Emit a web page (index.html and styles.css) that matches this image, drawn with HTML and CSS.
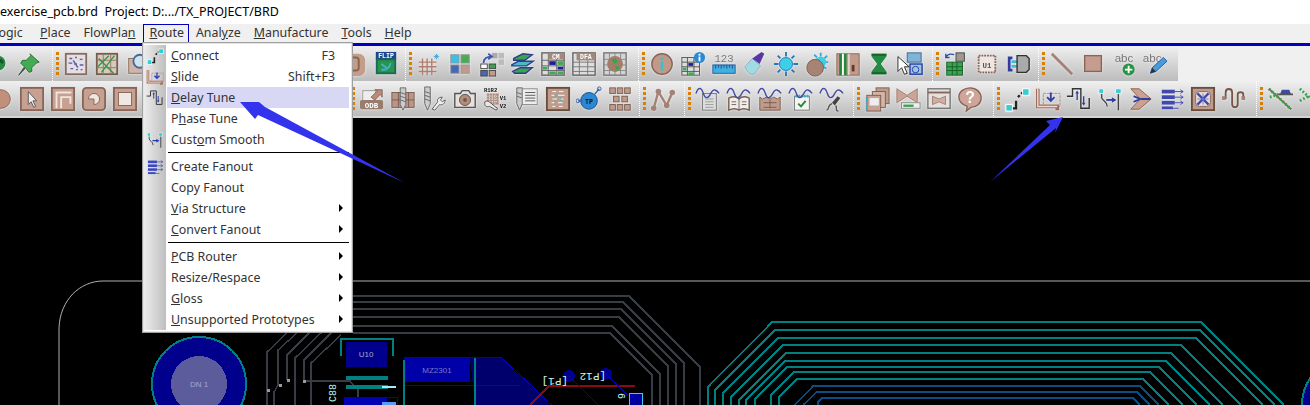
FILE: index.html
```html
<!DOCTYPE html>
<html lang="en">
<head>
    <meta charset="UTF-8">
    <title>exercise_pcb.brd</title>
    <link rel="stylesheet" href="styles.css">
</head>
<body>

<svg class="defs" xmlns="http://www.w3.org/2000/svg">
    <!-- toolbar icons, row 1 -->
    <symbol id="i-ball" viewBox="0 0 28 28"><circle cx="14" cy="13" r="8" fill="#1d8a3c"/><path d="M8 11c3-4 9-4 12 0l-1 3c-3-3-8-3-10 0z" fill="#0d5a24"/></symbol>
    <symbol id="i-pin" viewBox="0 0 28 28"><path d="M15 3l10 9-3 1-5 5 0 4-3 1-4-5-7 8 6-9-4-4 2-3 4 0 5-5z" fill="#38b048" stroke="#1c6c2c"/><path d="M2 27l7-9 1 1z" fill="#444"/></symbol>
    <symbol id="i-dots" viewBox="0 0 28 28"><rect x="3" y="3" width="22" height="22" fill="#e4dfe6" stroke="#8c6c5c" stroke-width="2"/><path d="M7 8h3M13 7h2M18 9h3M6 13h4M12 14h3M18 15h4M8 19h3M14 20h2M19 20h2M11 10l5 8" stroke="#5a5ab0" stroke-width="1.5"/></symbol>
    <symbol id="i-hatch" viewBox="0 0 28 28"><rect x="3" y="3" width="22" height="22" fill="#d8cabc" stroke="#7c5c4c" stroke-width="2"/><path d="M3 10h22M3 18h22M10 3v22M18 3v22" stroke="#9c7464"/><path d="M5 8l16 16M22 5L8 23M4 17l12-12" stroke="#2c9a3c" stroke-width="1.5"/></symbol>
    <symbol id="i-zoom" viewBox="0 0 28 28"><rect x="4" y="8" width="16" height="16" fill="#d4b4a4" stroke="#8c6c5c"/><circle cx="16" cy="11" r="7" fill="#cfe2ee" stroke="#3c6ca4" stroke-width="2"/></symbol>
    <symbol id="i-blob" viewBox="0 0 28 28"><rect x="3" y="3" width="22" height="24" rx="7" fill="#c89c84"/><rect x="9" y="7" width="9" height="14" rx="3" fill="none" stroke="#8c6448" stroke-width="2"/></symbol>
    <symbol id="i-flip" viewBox="0 0 28 28"><rect x="3" y="1" width="22" height="8" fill="#14489c"/><text x="14" y="8" class="t7 w" text-anchor="middle">FLIP</text><rect x="4" y="9" width="20" height="15" fill="#1a9a48" stroke="#0e6c54" stroke-width="2"/><path d="M9 20c5 1 9-2 10-7M9 14l7 5" stroke="#35b4d4" stroke-width="2" fill="none"/></symbol>
    <symbol id="i-grid" viewBox="0 0 28 28"><path d="M3 12h19M3 17h19M3 22h19M7 8v18M12 8v18M17 8v18" stroke="#b87c68" stroke-width="1.5"/><path d="M22 3v6M19 6h6M20 4l4 4M24 4l-4 4" stroke="#38a8dc"/></symbol>
    <symbol id="i-squares" viewBox="0 0 28 28"><rect x="4" y="4" width="9" height="9" fill="#28c4ee" stroke="#999"/><rect x="15" y="4" width="9" height="9" fill="#3cb04c" stroke="#999"/><rect x="4" y="15" width="9" height="9" fill="#4468c0" stroke="#999"/><rect x="15" y="15" width="9" height="9" fill="#c49a88" stroke="#999"/></symbol>
    <symbol id="i-swap" viewBox="0 0 28 28"><rect x="15" y="2" width="6" height="6" fill="#aaa"/><rect x="22" y="2" width="6" height="6" fill="#bbb"/><rect x="22" y="9" width="6" height="6" fill="#bbb"/><rect x="3" y="14" width="7" height="5" fill="#fff" stroke="#444"/><rect x="12" y="14" width="7" height="5" fill="#2fa840" stroke="#444"/><rect x="3" y="21" width="7" height="6" fill="#4468c0" stroke="#444"/><rect x="12" y="21" width="7" height="6" fill="#c49a88" stroke="#444"/><path d="M6 13c0-5 4-7 8-7M11 3l4 3-4 3" fill="none" stroke="#3c58b4" stroke-width="2"/></symbol>
    <symbol id="i-layers" viewBox="0 0 28 28"><path d="M5 8l10-5 10 1-8 6H5z" fill="#2ca844" stroke="#2c3c9c" stroke-width="1.5"/><path d="M3 15l7-4h16l-7 5H3z" fill="#38c0c8" stroke="#2c3c9c" stroke-width="1.5"/><path d="M4 22l8-4h13l-7 6H6z" fill="#2ca844" stroke="#2c3c9c" stroke-width="1.5"/></symbol>
    <symbol id="i-cm" viewBox="0 0 28 28"><rect x="2" y="2" width="24" height="24" fill="#ddd" stroke="#666" stroke-width="1.5"/><path d="M2 10h24M2 16h24M2 21h24M9 2v24M18 2v24" stroke="#666"/><rect x="9" y="2" width="17" height="7" fill="#a88878"/><text x="17" y="8.5" class="t7 w" text-anchor="middle">CM</text><rect x="10" y="11" width="7" height="4" fill="#1a1ab4"/><rect x="19" y="11" width="6" height="4" fill="#2cb04c"/><rect x="3" y="17" width="5" height="3" fill="#2cb04c"/><rect x="19" y="17" width="6" height="3" fill="#1a1ab4"/><rect x="10" y="22" width="7" height="3" fill="#2cb04c"/><rect x="19" y="22" width="6" height="3" fill="#2cb04c"/></symbol>
    <symbol id="i-dfa" viewBox="0 0 28 28"><rect x="2" y="2" width="24" height="24" fill="#ddd" stroke="#666" stroke-width="1.5"/><path d="M2 12h24M2 17h24M2 22h24M9 2v24M18 2v24" stroke="#777"/><rect x="6" y="2" width="20" height="8" fill="#a88878"/><text x="16" y="9" class="t7 w" text-anchor="middle">DFA</text></symbol>
    <symbol id="i-globe" viewBox="0 0 28 28"><rect x="2" y="2" width="24" height="24" fill="#d4d4d4" stroke="#777" stroke-width="1.5"/><path d="M2 9h24M2 15h24M2 21h24M8 2v24M14 2v24M20 2v24" stroke="#888"/><circle cx="14" cy="14" r="8.5" fill="#a87c64"/><path d="M10 9l5-1 2 4-4 2zM14 16l5 1-3 5z" fill="#2ca844"/></symbol>
    <symbol id="i-info" viewBox="0 0 28 28"><circle cx="14" cy="14" r="11" fill="#c89884" stroke="#8c6454" stroke-width="1.5"/><rect x="12.500" y="12" width="3" height="9" fill="#28c4d8"/><rect x="12.500" y="7" width="3" height="3" fill="#28c4d8"/></symbol>
    <symbol id="i-tinfo" viewBox="0 0 28 28"><rect x="2" y="7" width="19" height="19" fill="#ddd" stroke="#555"/><path d="M2 12h19M2 17h19M2 22h19M8 7v19M15 7v19" stroke="#555"/><rect x="9" y="13" width="5" height="3" fill="#1a1ab4"/><rect x="3" y="18" width="4" height="3" fill="#2cb04c"/><rect x="9" y="23" width="5" height="3" fill="#2cb04c"/><circle cx="21" cy="7" r="6" fill="#1c8ce0"/><rect x="20" y="6" width="2" height="5" fill="#fff"/><rect x="20" y="3" width="2" height="2" fill="#fff"/></symbol>
    <symbol id="i-ruler" viewBox="0 0 28 28"><text x="14" y="12" class="t10 g" text-anchor="middle">123</text><rect x="2" y="15" width="24" height="9" fill="#30b4ec" stroke="#1c58a8"/><path d="M5 15v4M8 15v3M11 15v4M14 15v3M17 15v4M20 15v3M23 15v4" stroke="#134c9c"/></symbol>
    <symbol id="i-brush" viewBox="0 0 28 28"><path d="M3 17l8-9 9 8-7 9c-4 1-8-3-10-8z" fill="#9adce8" stroke="#8ab"/><path d="M11 8l10-7 3 2-5 11z" fill="#5c34b4"/></symbol>
    <symbol id="i-sun" viewBox="0 0 28 28"><circle cx="14" cy="14" r="7" fill="#28d4f0" stroke="#1c78c8"/><path d="M14 1v5M14 22v5M1 14h5M22 14h5M5 5l3 3M20 20l3 3M23 5l-3 3M8 20l-3 3" stroke="#1c78c8" stroke-width="2"/></symbol>
    <symbol id="i-sunball" viewBox="0 0 28 28"><path d="M18 2v4M26 12h-4M25 5l-3 3M11 4l3 3M24 19l-3-2" stroke="#28a8e8" stroke-width="2"/><circle cx="18" cy="12" r="6" fill="#28d4f0"/><circle cx="12" cy="18" r="9" fill="#ac8270" stroke="#7c5c4c"/></symbol>
    <symbol id="i-bars" viewBox="0 0 28 28"><rect x="2" y="3" width="24" height="23" fill="#c89a86" stroke="#8c6454"/><path d="M6 3v23M11 3v23" stroke="#1c8a34" stroke-width="3"/><path d="M8.500 3v23" stroke="#fff" stroke-width="2"/><rect x="18" y="15" width="3" height="7" fill="#5c3c2c"/><path d="M15 3v23" stroke="#fff"/></symbol>
    <symbol id="i-glass" viewBox="0 0 28 28"><path d="M6 3h16v3l-6 8 6 8v3H6v-3l6-8-6-8z" fill="#189038"/><path d="M6 3h16v2H6zM6 23h16v2H6z" fill="#0c6424"/></symbol>
    <symbol id="i-cursor" viewBox="0 0 28 28"><rect x="11" y="2" width="15" height="10" fill="#78b4dc" stroke="#3464a4"/><rect x="14" y="14" width="13" height="11" fill="#9cc8e4" stroke="#1c3cb4" stroke-width="1.500"/><circle cx="20" cy="20" r="3.500" fill="none" stroke="#1c3cb4"/><path d="M1 6l0 16 4-4 3 7 3-1-3-7 5 0z" fill="#fff" stroke="#222"/></symbol>
    <symbol id="i-chip" viewBox="0 0 28 28"><rect x="4" y="12" width="17" height="14" fill="#2ca844" stroke="#0c6424"/><path d="M4 17h17M4 21h17M10 12v14M15 12v14" stroke="#0c6424"/><rect x="14" y="2" width="9" height="9" fill="#a09890" stroke="#444"/><path d="M3 7c2-4 6-4 9-3M3 3v4h4" fill="none" stroke="#2c4cb4" stroke-width="1.500"/></symbol>
    <symbol id="i-u1" viewBox="0 0 28 28"><rect x="5" y="5" width="18" height="18" fill="#eee6e0" stroke="#8c6454" stroke-width="2" stroke-dasharray="2 1"/><text x="14" y="18" class="t8 d" text-anchor="middle">U1</text></symbol>
    <symbol id="i-plug" viewBox="0 0 28 28"><path d="M3 6h5v3H6v10h2v3H3z" fill="#2c3cb4"/><rect x="7" y="10" width="6" height="3" fill="#28c4d8"/><rect x="7" y="15" width="6" height="3" fill="#28c4d8"/><path d="M13 5h10l3 3v12l-3 3H13z" fill="#aaa" stroke="#333" stroke-width="1.500"/></symbol>
    <symbol id="i-line" viewBox="0 0 28 28"><path d="M3 3l22 22" stroke="#a88070" stroke-width="3"/></symbol>
    <symbol id="i-rect" viewBox="0 0 28 28"><rect x="5" y="5" width="18" height="17" fill="#cb9c8b" stroke="#8c6454" stroke-width="1.500"/></symbol>
    <symbol id="i-abcadd" viewBox="0 0 28 28"><text x="14" y="12" class="t11 g" text-anchor="middle">abc</text><circle cx="19" cy="20" r="6.500" fill="#18983c"/><path d="M19 16v8M15 20h8" stroke="#fff" stroke-width="2"/></symbol>
    <symbol id="i-abcpen" viewBox="0 0 28 28"><text x="11" y="12" class="t11 g" text-anchor="middle">abc</text><path d="M9 24l2-6 12-11 4 4-12 11z" fill="#38a0ec" stroke="#1c58a8"/><path d="M9 24l2-6 4 4z" fill="#333"/></symbol>
    <!-- toolbar icons, row 2 -->
    <symbol id="i-circle" viewBox="0 0 28 28"><circle cx="14" cy="14" r="10" fill="#c88e78" stroke="#8c6454"/></symbol>
    <symbol id="i-arrowbox" viewBox="0 0 28 28"><rect x="2" y="2" width="24" height="24" fill="#cc9f8c" stroke="#8c6454" stroke-width="2"/><path d="M10 6v14l3-3 3 6 2-1-3-6h4z" fill="#eee" stroke="#555"/></symbol>
    <symbol id="i-nest" viewBox="0 0 28 28"><rect x="2" y="2" width="24" height="24" fill="#cc9f8c" stroke="#8c6454" stroke-width="2"/><path d="M7 24V7h16M12 24V12h10v7" fill="none" stroke="#f2e6de" stroke-width="2"/></symbol>
    <symbol id="i-arc" viewBox="0 0 28 28"><rect x="2" y="2" width="24" height="24" rx="4" fill="#cc9f8c" stroke="#8c6454" stroke-width="2"/><path d="M14 20a6 6 0 1 0-6-6h6z" fill="#f2e6de" stroke="#8c6454"/></symbol>
    <symbol id="i-sq" viewBox="0 0 28 28"><rect x="2" y="2" width="24" height="24" fill="#cc9f8c" stroke="#8c6454" stroke-width="2"/><rect x="7" y="7" width="14" height="14" fill="#f0e8e2" stroke="#8c6454"/></symbol>
    <symbol id="i-odb" viewBox="0 0 28 28"><rect x="4" y="5" width="14" height="12" fill="#eee" stroke="#999"/><path d="M13 12l7-7-3-1h8v8l-2-3-6 6z" fill="#c08a74" stroke="#8c6454"/><rect x="1" y="15" width="25" height="10" rx="2" fill="#9c7c6c"/><text x="13.500" y="23.500" class="t8 w" text-anchor="middle">ODB</text></symbol>
    <symbol id="i-drill" viewBox="0 0 28 28"><rect x="2" y="7" width="24" height="16" fill="#c09484" stroke="#7c5c4c"/><path d="M2 15h24M9 7v16M20 7v16" stroke="#7c5c4c"/><path d="M11 2h6v18l-3 6-3-6z" fill="#ccc" stroke="#666"/><path d="M11 7l6 2M11 11l6 2M11 15l6 2" stroke="#666"/></symbol>
    <symbol id="i-drillw" viewBox="0 0 28 28"><path d="M4 1h6v18l-3 7-3-7z" fill="#ccc" stroke="#666"/><path d="M4 6l6 2M4 10l6 2M4 14l6 2" stroke="#666"/><path d="M12 25l6-8c-1-3 1-5 5-5l-2 3 2 2 3-2c0 4-3 6-6 5l-5 6z" fill="#eee" stroke="#555"/></symbol>
    <symbol id="i-cam" viewBox="0 0 28 28"><path d="M3 8h6l2-3h7l2 3h5v15H3z" fill="#e8e0dc" stroke="#555" stroke-width="1.500"/><circle cx="14" cy="15" r="6" fill="#b88c78" stroke="#555"/><circle cx="14" cy="15" r="2" fill="#7c5444"/></symbol>
    <symbol id="i-rv" viewBox="0 0 28 28"><text x="1" y="6" class="t6 b">R1R2</text><text x="18" y="15" class="t6 b">V1</text><text x="18" y="24" class="t6 b">V2</text><path d="M4 8h13v12H4z" fill="#b48c7c"/><path d="M4 11h13M4 14h13M4 17h13M7 8v12M10 8v12M13 8v12" stroke="#eee" stroke-dasharray="1 1"/><path d="M2 17c3-2 4 0 6 1l6 5c2 0 2 3 0 3l-7-4c-3 1-6 0-5-5z" fill="#e8e8e8" stroke="#444"/></symbol>
    <symbol id="i-drilll" viewBox="0 0 28 28"><path d="M3 2h6v17l-3 7-3-7z" fill="#ccc" stroke="#666"/><path d="M3 7l6 2M3 11l6 2" stroke="#666"/><rect x="9" y="3" width="16" height="17" fill="#eee" stroke="#888"/><path d="M12 7h11M12 10h11M12 13h11M12 16h11" stroke="#555"/></symbol>
    <symbol id="i-board" viewBox="0 0 28 28"><rect x="2" y="2" width="24" height="24" fill="#c49a88" stroke="#6c4c3c" stroke-width="2"/><path d="M8 6h4M15 6h5M7 10h3M14 10h7M8 14h5M16 14h4M7 18h3M14 18h5M8 22h3M15 22h4" stroke="#fff"/><path d="M12 8v4M17 12v4M10 16h2" stroke="#28c4d8"/></symbol>
    <symbol id="i-tp" viewBox="0 0 28 28"><circle cx="14" cy="16" r="9" fill="#1c8ce0" stroke="#144c9c"/><text x="14" y="19" class="t7 b" text-anchor="middle">TP</text><path d="M20 9l5-6M7 16H2" stroke="#2c64b4" stroke-width="1.500"/><circle cx="25" cy="3" r="2" fill="none" stroke="#2c64b4"/><circle cx="2" cy="16" r="2" fill="none" stroke="#2c64b4"/></symbol>
    <symbol id="i-bricks" viewBox="0 0 28 28"><g fill="#c49a88" stroke="#7c5c4c"><rect x="3" y="2" width="6" height="6"/><rect x="11" y="2" width="6" height="6"/><rect x="19" y="2" width="6" height="6"/><rect x="7" y="11" width="6" height="6"/><rect x="16" y="11" width="6" height="6"/><rect x="3" y="20" width="6" height="6"/><rect x="11" y="20" width="6" height="6"/><rect x="19" y="20" width="6" height="6"/></g></symbol>
    <symbol id="i-nodes" viewBox="0 0 28 28"><path d="M4 24L9 6l9 15 6-14" fill="none" stroke="#a88070" stroke-width="2.500"/><g fill="#a88070"><circle cx="9" cy="6" r="3"/><circle cx="18" cy="21" r="3"/><circle cx="24" cy="7" r="3"/><circle cx="4" cy="24" r="3"/></g></symbol>
    <symbol id="i-wdoc" viewBox="0 0 28 28"><rect x="8" y="8" width="15" height="18" fill="#ddd" stroke="#777"/><path d="M11 14h9M11 17h9M11 20h9M11 23h9" stroke="#999"/><path d="M1 8c3-8 6-6 8 0s5 6 8 0 6-4 9 0" fill="none" stroke="#3c4cb4" stroke-width="1.500"/></symbol>
    <symbol id="i-wbook" viewBox="0 0 28 28"><path d="M3 13c4-2 8-2 11 1 3-3 7-3 11-1v13c-4-2-8-2-11 0-3-2-7-2-11 0z" fill="#eee" stroke="#7c5c4c" stroke-width="1.500"/><path d="M14 14v12M6 17h5M6 20h5M17 17h5M17 20h5" stroke="#7c5c4c"/><path d="M1 8c3-8 6-6 8 0s5 6 8 0 6-4 9 0" fill="none" stroke="#3c4cb4" stroke-width="1.500"/></symbol>
    <symbol id="i-wchip" viewBox="0 0 28 28"><path d="M3 12l3 2 4-2 4 2 4-2 4 2 3-2v14H3z" fill="#c49a88" stroke="#7c5c4c"/><path d="M7 18h14M7 23h14M14 15v9" stroke="#7c5c4c"/><path d="M1 8c3-8 6-6 8 0s5 6 8 0 6-4 9 0" fill="none" stroke="#3c4cb4" stroke-width="1.500"/></symbol>
    <symbol id="i-wnote" viewBox="0 0 28 28"><rect x="7" y="11" width="16" height="15" fill="#f4f4f0" stroke="#777"/><path d="M8 11h14" stroke="#28b4d4" stroke-width="3" stroke-dasharray="2 1"/><path d="M11 19l3 3 5-6" fill="none" stroke="#1c8a34" stroke-width="2"/><path d="M1 8c3-8 6-6 8 0s5 6 8 0 6-4 9 0" fill="none" stroke="#3c4cb4" stroke-width="1.500"/></symbol>
    <symbol id="i-wpen" viewBox="0 0 28 28"><path d="M1 8c3-8 6-6 8 0s5 6 8 0 6-4 9 0" fill="none" stroke="#3c4cb4" stroke-width="1.500"/><path d="M14 18l6-7 3 2-6 8z" fill="#444"/><path d="M14 19c-6 2-2 7-6 7M18 21c2 3-1 6 3 6" fill="none" stroke="#555" stroke-width="1.500"/></symbol>
    <symbol id="i-docs" viewBox="0 0 28 28"><rect x="13" y="2" width="14" height="17" fill="#c49a88" stroke="#7c5c4c"/><rect x="9" y="6" width="14" height="17" fill="#d8b4a4" stroke="#7c5c4c"/><rect x="3" y="10" width="15" height="17" fill="#cca090" stroke="#7c5c4c"/><rect x="6" y="13" width="10" height="8" fill="#eee"/><path d="M3 12v14" stroke="#28b4d4" stroke-width="2.500" stroke-dasharray="2 1"/></symbol>
    <symbol id="i-bow" viewBox="0 0 28 28"><path d="M2 3l11 7 11-7v15l-11-7-11 7z" fill="#cfa392" stroke="#a88070"/><rect x="7" y="18" width="20" height="6" fill="#eee" stroke="#888"/><rect x="9" y="20" width="11" height="2.500" fill="#2ca844"/></symbol>
    <symbol id="i-bowwin" viewBox="0 0 28 28"><rect x="2" y="3" width="24" height="21" fill="#e4e0de" stroke="#777" stroke-width="1.500"/><path d="M2 7h24" stroke="#8c6454" stroke-width="2"/><path d="M7 11l7 3 7-3v9l-7-3-7 3z" fill="#d4aea0" stroke="#a88070"/></symbol>
    <symbol id="i-help" viewBox="0 0 28 28"><path d="M14 2c7 0 12 5 12 11s-5 10-11 10l-5 4 1-5C6 20 2 17 2 12 2 6 8 2 14 2z" fill="#d4a494" stroke="#8c6454" stroke-width="1.500"/><text x="14" y="18" class="t16 w" text-anchor="middle">?</text></symbol>
    <symbol id="i-connect" viewBox="0 0 28 28"><path d="M8 24h5v-8" fill="none" stroke="#222" stroke-width="2.500"/><path d="M15 12l2-2M18.500 8.500l1.500-1.500" stroke="#222" stroke-width="2.500"/><rect x="2" y="20" width="7" height="7" fill="#28d0d8" stroke="#fff"/><rect x="20" y="3" width="7" height="7" fill="#28d0d8" stroke="#fff"/></symbol>
    <symbol id="i-slide" viewBox="0 0 28 28"><rect x="9" y="8" width="18" height="14" fill="none" stroke="#b08878" stroke-dasharray="3 1"/><path d="M3 3v19h21v4" fill="none" stroke="#a66a58" stroke-width="4"/><path d="M3 3v19h21" fill="none" stroke="#f0d8cc" stroke-width="1.500"/><path d="M17 7v9M13 12l4 4 4-4" fill="none" stroke="#2c3cb4" stroke-width="2"/></symbol>
    <symbol id="i-delay" viewBox="0 0 28 28"><path d="M1 11h6V3h9v21h9v-11" fill="none" stroke="#333" stroke-width="1.500"/><path d="M12 6v9M19 11v9" stroke="#2c3cb4" stroke-width="1.500"/><path d="M10 8l2-3 2 3zM17 18l2 3 2-3z" fill="#2c3cb4"/></symbol>
    <symbol id="i-phase" viewBox="0 0 28 28"><path d="M5 8v4c0 4 6 4 6 10M23 8v18" fill="none" stroke="#444" stroke-width="1.500"/><rect x="2" y="3" width="5" height="5" fill="#28d0d8" stroke="#eee"/><rect x="20" y="3" width="6" height="5" fill="#28d0d8" stroke="#eee"/><path d="M10 15h9" stroke="#2c3cb4" stroke-width="2"/><path d="M16 12l5 3-5 3z" fill="#2c3cb4"/></symbol>
    <symbol id="i-chev" viewBox="0 0 28 28"><path d="M3 3h9l13 11-13 11H3l10-11z" fill="#d0a08c" stroke="#8c5c48"/><path d="M6 11l7 3-7 3M14 14h10" stroke="#2c3cb4" stroke-width="2" fill="none"/></symbol>
    <symbol id="i-fanout" viewBox="0 0 28 28"><g fill="#3c48c0"><rect x="3" y="4" width="14" height="4"/><rect x="3" y="10" width="14" height="4"/><rect x="3" y="16" width="14" height="4"/><rect x="3" y="22" width="12" height="3"/></g><path d="M17 6h9M17 12h9M17 18h9M15 24h6M23 4l3 2-3 2M23 10l3 2-3 2M23 16l3 2-3 2" fill="none" stroke="#3c48c0"/></symbol>
    <symbol id="i-xbox" viewBox="0 0 28 28"><rect x="2" y="2" width="24" height="24" fill="#c49a88" stroke="#6c4c3c" stroke-width="2"/><rect x="6" y="6" width="16" height="16" rx="4" fill="#ecdcd4" stroke="#8c6454"/><path d="M8 8l12 12M20 8L8 20" stroke="#3c48c0" stroke-width="2.500"/><path d="M8 14h12M14 8v12" stroke="#6c78d4"/></symbol>
    <symbol id="i-wiggle" viewBox="0 0 28 28"><path d="M2 13h3V7c0-5 7-5 7 0v12c0 5 6 5 6 0V9c0-3 6-3 6 0v3" fill="none" stroke="#7c5444" stroke-width="2"/><rect x="1" y="11" width="4" height="4" fill="#a88070"/><rect x="22" y="11" width="4" height="4" fill="#a88070"/></symbol>
    <symbol id="i-nethat" viewBox="0 0 28 28"><path d="M2 3l24 22" stroke="#8c6c4c" stroke-width="2"/><path d="M2 3l24 22M3 12l9-3" stroke="#28a844" stroke-width="3" stroke-dasharray="2 2"/><path d="M14 9l2-5h8l2 5z" fill="#3c48b0"/><rect x="12" y="8" width="16" height="2" fill="#555"/></symbol>
    <symbol id="i-net" viewBox="0 0 28 28"><path d="M2 3l24 22M2 16l9-5" stroke="#28a844" stroke-width="3" stroke-dasharray="2 2"/></symbol>
</svg>

<div class="app">
    <div class="title-bar">exercise_pcb.brd&nbsp;&nbsp;Project: D:.../TX_PROJECT/BRD</div>

    <div class="menu-bar">
        <span class="menu-first">Logic</span>
        <span class="menu-name"><u>P</u>lace</span>
        <span class="menu-name">FlowPla<u>n</u></span>
        <span class="menu-name menu-open"><u>R</u>oute</span>
        <span class="menu-name">Anal<u>y</u>ze</span>
        <span class="menu-name"><u>M</u>anufacture</span>
        <span class="menu-name"><u>T</u>ools</span>
        <span class="menu-name"><u>H</u>elp</span>
    </div>

    <div class="tool-row">
        <div class="tb tb-a">
            <span class="slot"><svg class="ic"><use href="#i-ball"/></svg></span>
            <span class="slot"><svg class="ic"><use href="#i-pin"/></svg></span>
        </div>
        <div class="tb tb-b">
            <i class="handle"></i>
            <span class="slot"><svg class="ic"><use href="#i-dots"/></svg></span>
            <span class="slot"><svg class="ic"><use href="#i-hatch"/></svg></span>
            <span class="slot"><svg class="ic"><use href="#i-zoom"/></svg></span>
            <span class="slot"></span><span class="slot"></span><span class="slot"></span><span class="slot"></span><span class="slot"></span><span class="slot"></span>
            <span class="slot"><svg class="ic"><use href="#i-blob"/></svg></span>
            <span class="slot"><svg class="ic"><use href="#i-flip"/></svg></span>
        </div>
        <div class="tb tb-c">
            <i class="handle"></i>
            <span class="slot"><svg class="ic"><use href="#i-grid"/></svg></span>
            <span class="slot"><svg class="ic"><use href="#i-squares"/></svg></span>
            <span class="slot"><svg class="ic"><use href="#i-swap"/></svg></span>
            <span class="slot"><svg class="ic"><use href="#i-layers"/></svg></span>
            <span class="slot"><svg class="ic"><use href="#i-cm"/></svg></span>
            <span class="slot"><svg class="ic"><use href="#i-dfa"/></svg></span>
            <span class="slot"><svg class="ic"><use href="#i-globe"/></svg></span>
        </div>
        <div class="tb tb-d">
            <i class="handle"></i>
            <span class="slot"><svg class="ic"><use href="#i-info"/></svg></span>
            <span class="slot"><svg class="ic"><use href="#i-tinfo"/></svg></span>
            <span class="slot"><svg class="ic"><use href="#i-ruler"/></svg></span>
            <span class="slot"><svg class="ic"><use href="#i-brush"/></svg></span>
            <span class="slot"><svg class="ic"><use href="#i-sun"/></svg></span>
            <span class="slot"><svg class="ic"><use href="#i-sunball"/></svg></span>
            <span class="slot"><svg class="ic"><use href="#i-bars"/></svg></span>
            <span class="slot"><svg class="ic"><use href="#i-glass"/></svg></span>
            <span class="slot"><svg class="ic"><use href="#i-cursor"/></svg></span>
        </div>
        <div class="tb tb-e">
            <i class="handle"></i>
            <span class="slot"><svg class="ic"><use href="#i-chip"/></svg></span>
            <span class="slot"><svg class="ic"><use href="#i-u1"/></svg></span>
            <span class="slot"><svg class="ic"><use href="#i-plug"/></svg></span>
        </div>
        <div class="tb tb-f">
            <i class="handle"></i>
            <span class="slot"><svg class="ic"><use href="#i-line"/></svg></span>
            <span class="slot"><svg class="ic"><use href="#i-rect"/></svg></span>
            <span class="slot"><svg class="ic"><use href="#i-abcadd"/></svg></span>
            <span class="slot"><svg class="ic"><use href="#i-abcpen"/></svg></span>
        </div>
    </div>

    <div class="tool-row">
        <div class="tb tb-g">
            <span class="slot"><svg class="ic"><use href="#i-circle"/></svg></span>
            <span class="slot"><svg class="ic"><use href="#i-arrowbox"/></svg></span>
            <span class="slot"><svg class="ic"><use href="#i-nest"/></svg></span>
            <span class="slot"><svg class="ic"><use href="#i-arc"/></svg></span>
            <span class="slot"><svg class="ic"><use href="#i-sq"/></svg></span>
            <span class="slot"></span><span class="slot"></span><span class="slot"></span><span class="slot"></span><span class="slot"></span><span class="slot"></span>
        </div>
        <div class="tb tb-h">
            <i class="handle"></i>
            <span class="slot"><svg class="ic"><use href="#i-odb"/></svg></span>
            <span class="slot"><svg class="ic"><use href="#i-drill"/></svg></span>
            <span class="slot"><svg class="ic"><use href="#i-drillw"/></svg></span>
            <span class="slot"><svg class="ic"><use href="#i-cam"/></svg></span>
            <span class="slot"><svg class="ic"><use href="#i-rv"/></svg></span>
            <span class="slot"><svg class="ic"><use href="#i-drilll"/></svg></span>
            <span class="slot"><svg class="ic"><use href="#i-board"/></svg></span>
            <span class="slot"><svg class="ic"><use href="#i-tp"/></svg></span>
            <span class="slot"><svg class="ic"><use href="#i-bricks"/></svg></span>
        </div>
        <div class="tb tb-i">
            <i class="handle"></i>
            <span class="slot"><svg class="ic"><use href="#i-nodes"/></svg></span>
        </div>
        <div class="tb tb-j">
            <i class="handle"></i>
            <span class="slot"><svg class="ic"><use href="#i-wdoc"/></svg></span>
            <span class="slot"><svg class="ic"><use href="#i-wbook"/></svg></span>
            <span class="slot"><svg class="ic"><use href="#i-wchip"/></svg></span>
            <span class="slot"><svg class="ic"><use href="#i-wnote"/></svg></span>
            <span class="slot"><svg class="ic"><use href="#i-wpen"/></svg></span>
        </div>
        <div class="tb tb-k">
            <i class="handle"></i>
            <span class="slot"><svg class="ic"><use href="#i-docs"/></svg></span>
            <span class="slot"><svg class="ic"><use href="#i-bow"/></svg></span>
            <span class="slot"><svg class="ic"><use href="#i-bowwin"/></svg></span>
            <span class="slot"><svg class="ic"><use href="#i-help"/></svg></span>
        </div>
        <div class="tb tb-l">
            <i class="handle"></i>
            <span class="slot"><svg class="ic"><use href="#i-connect"/></svg></span>
            <span class="slot"><svg class="ic"><use href="#i-slide"/></svg></span>
            <span class="slot"><svg class="ic"><use href="#i-delay"/></svg></span>
            <span class="slot"><svg class="ic"><use href="#i-phase"/></svg></span>
            <span class="slot"><svg class="ic"><use href="#i-chev"/></svg></span>
            <span class="slot"><svg class="ic"><use href="#i-fanout"/></svg></span>
            <span class="slot"><svg class="ic"><use href="#i-xbox"/></svg></span>
            <span class="slot"><svg class="ic"><use href="#i-wiggle"/></svg></span>
        </div>
        <div class="tb tb-m">
            <i class="handle"></i>
            <span class="slot"><svg class="ic"><use href="#i-nethat"/></svg></span>
            <span class="slot"><svg class="ic"><use href="#i-net"/></svg></span>
        </div>
    </div>
    <div class="tool-edge"></div>

    <!-- board canvas, coordinates are page pixels -->
    <svg class="board" viewBox="0 118 1310 287" xmlns="http://www.w3.org/2000/svg">
        <path class="outline" d="M59 405V328C60 300 80 281 103 281H1310"/>

        <g class="trace-dark">
            <path d="M353 296H629L700 367V405"/>
            <path d="M353 302H623L684 363V405"/>
            <path d="M353 309H621L676 364V405"/>
            <path d="M353 317H619L668 366V405"/>
            <path d="M353 326H612L660 374V405"/>
            <path d="M353 333H610L652 375V405"/>
            <path d="M288 332L267 352V405"/>
            <path d="M298 332L278 350V385L274 392V405"/>
            <path d="M310 332L287 355V380"/>
            <path d="M322 332L295 358V405"/>
            <path d="M332 332L304 360V381H350L358 390V405"/>
            <path d="M341 335L311 363V405"/>
        </g>
        <g class="via">
            <rect x="267" y="389" width="3" height="3"/>
            <rect x="279" y="384" width="3" height="3"/>
            <rect x="287" y="379" width="3" height="3"/>
            <rect x="303" y="380" width="3" height="3"/>
        </g>

        <!-- part by the bottom edge of the menu -->
        <circle cx="199" cy="384" r="47" fill="#00008c" stroke="#008080" stroke-width="2"/>
        <circle cx="199" cy="384" r="28" fill="#5c5c9c"/>
        <text x="199" y="387" class="label-part" text-anchor="middle">DN 1</text>

        <path d="M341 356V339H393V356" fill="none" stroke="#008080" stroke-width="2"/>
        <rect x="346" y="342" width="41" height="25" fill="#00008c"/>
        <text x="366" y="357" class="label-part" text-anchor="middle">U10</text>
        <rect x="346" y="376" width="42" height="4" fill="#008080"/>
        <rect x="346" y="385" width="42" height="4" fill="#008080"/>
        <rect x="382" y="386" width="14" height="2" fill="#9cf0f0"/>
        <text x="0" y="0" class="label-ref" transform="translate(336 402) rotate(-90)">C88</text>
        <rect x="344" y="397" width="43" height="8" fill="#0000b4"/>
        <path d="M387 397H397V405" fill="none" stroke="#0000c8"/>
        <rect x="382" y="402" width="14" height="3" fill="#5c9cf0"/>

        <path d="M470 358H501L551 405H475z" fill="#00006c"/>
        <rect x="404" y="358" width="66" height="24" fill="#0000a8"/>
        <text x="437" y="373" class="label-part label-dim" text-anchor="middle">MZ2301</text>
        <path d="M404 357H501L552 405M404 357V385H520" fill="none" stroke="#0000c8"/>
        <path d="M404 360V405M475 358V405" stroke="#008080" stroke-width="1.500"/>

        <path d="M530 405L549 386H635" fill="none" stroke="#8c0a14" stroke-width="2"/>
        <circle cx="569" cy="376" r="6" fill="#00008c"/>
        <circle cx="606" cy="374" r="6" fill="#00008c"/>
        <path d="M569 376L598 405M606 374L636 403" stroke="#0000c8"/>
        <rect x="629" y="393" width="13" height="12" fill="#0000a0" stroke="#4cc8d8"/>
        <text x="0" y="0" class="label-pin" transform="translate(568 378) rotate(180)">[P1]</text>
        <text x="0" y="0" class="label-pin" transform="translate(606 373) rotate(180)">[P12</text>
        <text x="0" y="0" class="label-ref" transform="translate(618 393) rotate(90)">6</text>

        <g class="trace-teal">
            <path d="M708 405V387L772 322H1201L1284 405"/>
            <path d="M715 405V390L775 330H1200L1275 405"/>
            <path d="M723 405V393L778 338H1196L1263 405"/>
            <path d="M731 405V397L783 345H1181L1241 405"/>
            <path d="M739 405V400L786 353H1171L1223 405"/>
            <path d="M746 405V400L785 361H1166L1210 405"/>
            <path d="M755 405V399L787 367H1159L1197 405"/>
            <path d="M771 405V395L794 372H1150L1183 405"/>
            <path d="M779 405V397L797 379H1143L1169 405"/>
        </g>
        <g class="trace-navy">
            <path d="M795 405L813 386H1140L1159 405"/>
            <path d="M803 405L817 392H1137L1150 405"/>
            <path d="M818 405V402L822 398H1133L1140 405"/>
        </g>

        <circle cx="1350" cy="405" r="48" fill="#00008c" stroke="#008080" stroke-width="2"/>
    </svg>

    <div class="route-menu">
        <div class="menu-item"><span class="menu-icon"><svg><use href="#i-connect"/></svg></span><span class="menu-label"><u>C</u>onnect</span><span class="menu-key">F3</span></div>
        <div class="menu-item"><span class="menu-icon"><svg><use href="#i-slide"/></svg></span><span class="menu-label"><u>S</u>lide</span><span class="menu-key">Shift+F3</span></div>
        <div class="menu-item selected"><span class="menu-icon"><svg><use href="#i-delay"/></svg></span><span class="menu-label"><u>D</u>elay Tune</span></div>
        <div class="menu-item"><span class="menu-icon"></span><span class="menu-label">P<u>h</u>ase Tune</span></div>
        <div class="menu-item"><span class="menu-icon"><svg><use href="#i-phase"/></svg></span><span class="menu-label">Cust<u>o</u>m Smooth</span></div>
        <div class="menu-sep"><span class="menu-icon"></span><hr></div>
        <div class="menu-item"><span class="menu-icon"><svg><use href="#i-fanout"/></svg></span><span class="menu-label">Create Fanout</span></div>
        <div class="menu-item"><span class="menu-icon"></span><span class="menu-label">Copy Fanout</span></div>
        <div class="menu-item sub"><span class="menu-icon"></span><span class="menu-label"><u>V</u>ia Structure</span></div>
        <div class="menu-item sub"><span class="menu-icon"></span><span class="menu-label"><u>C</u>onvert Fanout</span></div>
        <div class="menu-sep"><span class="menu-icon"></span><hr></div>
        <div class="menu-item sub"><span class="menu-icon"></span><span class="menu-label"><u>P</u>CB Router</span></div>
        <div class="menu-item sub"><span class="menu-icon"></span><span class="menu-label">Resize/Respace</span></div>
        <div class="menu-item sub"><span class="menu-icon"></span><span class="menu-label"><u>G</u>loss</span></div>
        <div class="menu-item sub"><span class="menu-icon"></span><span class="menu-label"><u>U</u>nsupported Prototypes</span></div>
    </div>

    <!-- the two hand drawn arrows on top of the screenshot -->
    <svg class="marks" viewBox="0 0 1310 405" xmlns="http://www.w3.org/2000/svg">
        <path d="M240 102L259 102L265 107L405 183L258 115L255 119z"/>
        <path d="M1063 117L1046 121L1050 125L990 182L1056 128L1055 133z"/>
    </svg>
</div>

</body>
</html>
```

FILE: styles.css
```css
body {
    margin: 0;
    background-color: #000;
    overflow: hidden;
    font-family: "Noto Sans", sans-serif;
}

.defs {
    display: none;
}

.app {
    position: relative;
    width: 1310px;
    height: 405px;
    overflow: hidden;
}

/* title and menu */
.title-bar {
    height: 24px;
    line-height: 23px;
    background-color: #fff;
    color: #000;
    font-size: 12.5px;
    white-space: nowrap;
}

.menu-bar {
    display: flex;
    height: 19px;
    background-color: #f0f0f0;
    border-bottom: 3px solid #0000c0;
    color: #333;
    font-size: 12.4px;
    line-height: 17px;
}

.menu-first {
    width: 34px;
    margin-left: -8px;
    margin-right: 14px;
}

.menu-name {
    height: 17px;
    margin-right: 13px;
}

.menu-open {
    margin-left: -6px;
    margin-right: 7px;
    padding: 0 4px 0 6px;
    border: 1px solid #0000c0;
    line-height: 16px;
}

/* toolbars */
.tool-row {
    display: flex;
    height: 35px;
    background-color: #f0f0f0;
    overflow: hidden;
}

.tb {
    display: flex;
    flex-shrink: 0;
    align-items: center;
    box-sizing: border-box;
    height: 35px;
    background: linear-gradient(#f0f0f0, #d8d8d8 45%, #bcbcbc);
}

.handle {
    flex-shrink: 0;
    width: 3px;
    height: 24px;
    margin: 0 1px 0 3px;
    background: repeating-linear-gradient(#d88000 0 3px, transparent 3px 5px);
    border: 0;
}

.tb-a, .tb-g {
    padding-right: 8px;
}

.tb-a {
    margin-left: -18px;
}

.tb-g {
    margin-left: -15px;
    padding-right: 22px;
}

.tb-b, .tb-c, .tb-d, .tb-e, .tb-f,
.tb-h, .tb-i, .tb-j, .tb-k, .tb-l, .tb-m {
    border-left: 1px dotted #fff;
}

.tb-b { padding-right: 4px; }
.tb-c { padding-right: 8px; }
.tb-d { padding-right: 7px; }
.tb-e { padding-right: 5px; }
.tb-f { padding-right: 8px; }
.tb-h { padding-right: 4px; }
.tb-i { padding-right: 6px; }
.tb-j { padding-right: 6px; }
.tb-k { padding-right: 8px; }
.tb-l { padding-right: 7px; }

.slot {
    display: flex;
    flex-shrink: 0;
    align-items: center;
    justify-content: center;
    width: 31px;
    height: 35px;
}

.ic {
    width: 26px;
    height: 26px;
    filter: saturate(0.85) drop-shadow(0 0 1px #f0f0f0);
}

.tool-edge {
    height: 2px;
    background-color: #d4d4d4;
}

/* small texts inside the icons */
.t6 { font: bold 6px "Liberation Mono", monospace; }
.t7 { font: bold 7px "Liberation Mono", monospace; }
.t8 { font: bold 8px "Liberation Mono", monospace; }
.t10 { font: 11.5px "Liberation Mono", monospace; }
.t11 { font: 12.5px "Liberation Sans", sans-serif; }
.t16 { font: bold 17px "Liberation Sans", sans-serif; }
.w { fill: #fff; }
.g { fill: #777; }
.d { fill: #555; }
.b { fill: #111; }

/* board */
.board {
    display: block;
    width: 1310px;
    height: 287px;
    background-color: #000;
    shape-rendering: crispEdges;
}

.outline {
    fill: none;
    stroke: #b0b0b0;
    shape-rendering: auto;
}

.trace-dark path {
    fill: none;
    stroke: #383c44;
    stroke-width: 1.5;
}

.via rect {
    fill: #9a9a9a;
}

.trace-teal path {
    fill: none;
    stroke: #008080;
    stroke-width: 1.5;
}

.trace-navy path {
    fill: none;
    stroke: #0c4c80;
    stroke-width: 1.5;
}

.label-part {
    font: 8px "Liberation Sans", sans-serif;
    fill: #a8a8c8;
}

.label-dim {
    fill: #7878c8;
}

.label-ref {
    font: 10px "Liberation Mono", monospace;
    fill: #b8f4f4;
}

.label-pin {
    font: 11px "Liberation Mono", monospace;
    fill: #c8f8f8;
}

/* open Route menu */
.route-menu {
    position: absolute;
    left: 142px;
    top: 42px;
    box-sizing: border-box;
    width: 211px;
    height: 291px;
    padding: 2px 3px 3px 1px;
    background-color: #fff;
    border: 1px solid #a0a0a0;
    box-shadow: inset 0 0 0 1px #e4e4e4;
    color: #333;
    font-size: 12.4px;
}

.menu-item {
    display: flex;
    align-items: center;
    height: 21px;
}

.menu-icon {
    display: flex;
    flex-shrink: 0;
    align-items: center;
    justify-content: center;
    align-self: stretch;
    width: 22px;
    margin-right: 5px;
    background: linear-gradient(90deg, #ececec, #bebebe);
}

.menu-icon svg {
    width: 18px;
    height: 18px;
}

.menu-label {
    flex: 1;
    white-space: nowrap;
}

.menu-key {
    margin-right: 14px;
}

.selected {
    background: linear-gradient(90deg, transparent 23px, #d8d8f4 23px);
}

.sub {
    position: relative;
}

.sub::after {
    content: "";
    position: absolute;
    right: 6px;
    top: 6px;
    border-left: 4px solid #000;
    border-top: 4px solid transparent;
    border-bottom: 4px solid transparent;
}

.menu-sep {
    display: flex;
    height: 6px;
}

.menu-sep hr {
    flex: 1;
    height: 1px;
    margin: 2px 0 0 -3px;
    background-color: #000;
    border: 0;
}

/* annotation arrows */
.marks {
    position: absolute;
    left: 0;
    top: 0;
    width: 1310px;
    height: 405px;
    fill: #3333ee;
    pointer-events: none;
}
```
